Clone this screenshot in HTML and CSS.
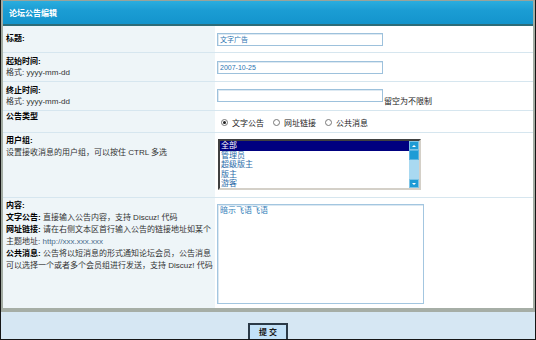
FILE: index.html
```html
<!DOCTYPE html>
<html lang="zh">
<head>
<meta charset="utf-8">
<title>论坛公告编辑</title>
<link rel="stylesheet" href="styles.css">
</head>
<body>
<div class="frame">
  <div class="panel">
    <div class="head">论坛公告编辑</div>

    <div class="row r-title">
      <div class="lab"><b>标题:</b></div>
      <div class="val"><span class="inp">文字广告</span></div>
    </div>

    <div class="row r-date">
      <div class="lab"><b>起始时间:</b><br>格式: yyyy-mm-dd</div>
      <div class="val"><span class="inp">2007-10-25</span></div>
    </div>

    <div class="row r-date r-end">
      <div class="lab"><b>终止时间:</b><br>格式: yyyy-mm-dd</div>
      <div class="val"><span class="inp"></span><span class="hint">留空为不限制</span></div>
    </div>

    <div class="row r-type">
      <div class="lab"><b>公告类型</b></div>
      <div class="val radios">
        <span class="radio on"></span><span class="rt">文字公告</span>
        <span class="radio"></span><span class="rt">网址链接</span>
        <span class="radio"></span><span class="rt">公共消息</span>
      </div>
    </div>

    <div class="row r-group">
      <div class="lab"><b>用户组:</b><br>设置接收消息的用户组，可以按住 CTRL 多选</div>
      <div class="val">
        <div class="sel">
          <div class="opts">
            <div class="opt on">全部</div>
            <div class="opt">管理员</div>
            <div class="opt">超级版主</div>
            <div class="opt">版主</div>
            <div class="opt">游客</div>
          </div>
          <div class="sbar">
            <div class="sbtn"><span class="up"></span></div>
            <div class="thumb"></div>
            <div class="track"></div>
            <div class="sbtn"><span class="down"></span></div>
          </div>
        </div>
      </div>
    </div>

    <div class="row r-content">
      <div class="lab"><b>内容:</b><br><b>文字公告:</b> 直接输入公告内容，支持 Discuz! 代码<br><b>网址链接:</b> 请在右侧文本区首行输入公告的链接地址如某个<br>主题地址: <span class="url">http://xxx.xxx.xxx</span><br><b>公共消息:</b> 公告将以短消息的形式通知论坛会员，公告消息<br>可以选择一个或者多个会员组进行发送，支持 Discuz! 代码</div>
      <div class="val"><div class="ta">暗示飞语飞语</div></div>
    </div>
  </div>
  <div class="foot"><span class="btn">提 交</span></div>
</div>
</body>
</html>
```

FILE: styles.css
```css
* { box-sizing: border-box; }
html, body { margin: 0; padding: 0; background: #fff; }
body {
  font-family: "Liberation Sans", "Noto Sans CJK SC", sans-serif;
  font-size: 8px;
  color: #333;
}
.frame {
  width: 536px;
  height: 340px;
  border-left: 1px solid #161616;
  border-right: 1px solid #161616;
  border-bottom: 1px solid #161616;
  background: #d6e7f3;
  display: flex;
  flex-direction: column;
  overflow: hidden;
}
.panel {
  border-top: 1px solid #9aa39a;
  border-left: 2px solid #a3aca3;
  border-right: 2px solid #a3aca3;
  border-bottom: 4px solid #a6aea6;
  background: #fff;
}
.head {
  height: 25px;
  background: linear-gradient(#2badde, #1b9dd4 40%, #1394cc);
  border-bottom: 2px solid #2d6c78;
  color: #fff;
  font-weight: bold;
  padding-left: 6px;
  display: flex;
  align-items: center;
}
.row {
  display: grid;
  grid-template-columns: 212px 1fr;
  border-bottom: 1px solid #d6e6ef;
}
.lab {
  background: #eef5f8;
  padding-left: 3px;
  white-space: nowrap;
  line-height: 12px;
  color: #333;
}
.lab b { color: #000; }
.val { padding-left: 2px; display: flex; }
.r-title { height: 27px; }
.r-title .lab, .r-title .val { display: flex; align-items: center; }
.r-date { height: 29px; }
.r-date .lab { display: flex; flex-direction: column; justify-content: center; line-height: 11px; }
.r-date .lab br { display: none; }
.r-date .val { align-items: center; }
.r-end .val { align-items: center; }
.r-end .val .inp { margin-top: -2px; }
.inp {
  display: block;
  width: 166px;
  height: 13px;
  border: 1px solid #9dc1dc;
  box-shadow: inset 1px 1px 0 #dde9f2;
  background: #fff;
  color: #2b75b2;
  font-size: 7px;
  line-height: 11px;
  padding-left: 2px;
}
.hint { color: #222; align-self: flex-end; margin-left: 1px; margin-bottom: 3px; line-height: 10px; }
.r-type { height: 22px; }
.radios { align-items: center; padding-left: 6px; padding-top: 1px; color: #222; }
.radio {
  width: 7px; height: 7px;
  border-radius: 50%;
  border: 1px solid #777;
  background: #fff;
  position: relative;
  margin-right: 4px;
}
.radio.on::after {
  content: "";
  position: absolute;
  left: 1px; top: 1px;
  width: 3px; height: 3px;
  border-radius: 50%;
  background: #222;
}
.rt { margin-right: 9px; }
.r-group { height: 65px; }
.r-group .lab { padding-top: 2px; }
.r-group .val { padding-top: 6px; padding-left: 3px; align-items: flex-start; }
.sel {
  width: 203px;
  height: 51px;
  border: 2px solid;
  border-color: #404040 #d4d0c8 #d4d0c8 #404040;
  background: #fff;
  display: flex;
}
.opts { flex: 1; }
.opt {
  height: 9.5px;
  line-height: 9.5px;
  color: #2a6aa8;
  padding-left: 1px;
}
.opt.on { background: #000080; color: #fff; }
.sbar { width: 10px; display: flex; flex-direction: column; background: #a9d9f1; }
.sbtn {
  height: 9px;
  background: #1e9bd5;
  border: 1px solid #7cc4e6;
  display: flex; align-items: center; justify-content: center;
}
.up { width: 0; height: 0; border-left: 2.5px solid transparent; border-right: 2.5px solid transparent; border-bottom: 2.5px solid #fff; }
.down { width: 0; height: 0; border-left: 2.5px solid transparent; border-right: 2.5px solid transparent; border-top: 2.5px solid #fff; }
.thumb { height: 10px; background: #1e9bd5; border: 1px solid #5cb4e0; }
.track { flex: 1; }
.r-content { height: 110px; border-bottom: none; }
.r-content .lab { padding-top: 2px; }
.r-content .val { padding-top: 6px; align-items: flex-start; }
.url { color: #4a6c8c; }
.ta {
  width: 207px;
  height: 100px;
  border: 1px solid #a3c6e0;
  box-shadow: inset 1px 1px 0 #dbe8f2;
  color: #2f7db8;
  padding: 1px 2px;
  line-height: 10px;
}
.foot {
  flex: 1;
  padding-left: 247px;
  padding-top: 11px;
  overflow: hidden;
}
.btn {
  display: flex;
  align-items: center;
  justify-content: center;
  width: 40px;
  height: 19px;
  border: 2px solid #2b3a47;
  background: #c2e1f7;
  color: #1a1a1a;
  font-weight: bold;
  padding-bottom: 2px;
}
```
